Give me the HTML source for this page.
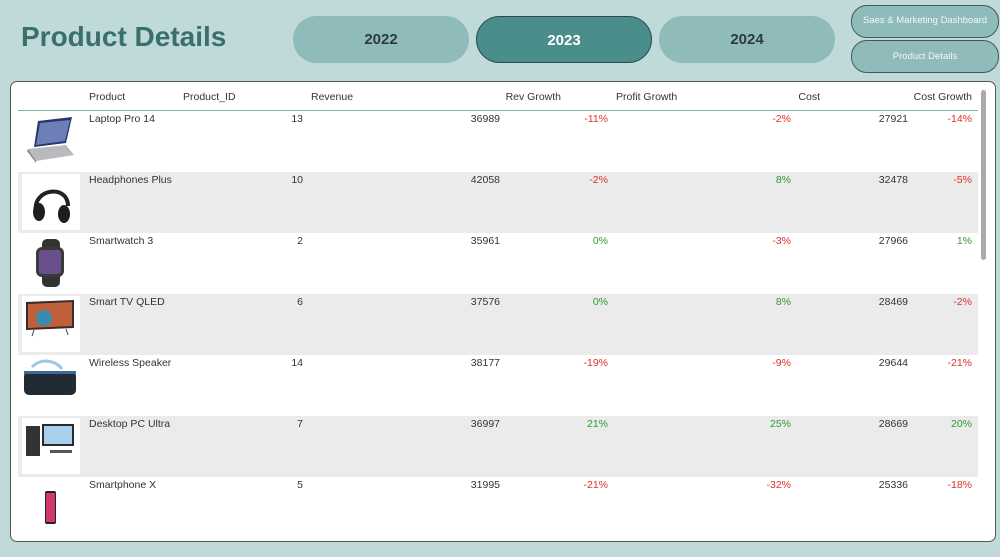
<!DOCTYPE html>
<html><head><style>
*{margin:0;padding:0;box-sizing:border-box}
body{width:1000px;height:557px;background:#bfdad9;font-family:"Liberation Sans",sans-serif;position:relative;overflow:hidden}
.abs{position:absolute}
h1{position:absolute;left:21px;top:21px;font-size:28px;font-weight:bold;color:#3a6f6e}
.yr{position:absolute;top:16px;width:176px;height:47px;border-radius:24px;background:#8fbcbb;font-size:15px;font-weight:bold;color:#2c3c3c;text-align:center;line-height:47px}
.nav{position:absolute;left:851px;width:148px;border:1.5px solid #3c5c5c;border-radius:16px;background:#8fbcbb;color:#f2f8f8;font-size:9.5px;text-align:center}
.panel{position:absolute;left:10px;top:81px;width:986px;height:461px;background:#fff;border:1.5px solid #555;border-radius:7px}
.t{position:absolute;font-size:10.5px;color:#333;white-space:nowrap}
.r{text-align:right}
.red{color:#e0302a}.grn{color:#2f9a2f}
.row{position:absolute;left:18px;width:960px;height:61px}
.g{background:#ebebeb}
.img{position:absolute;left:22px;width:58px;height:56px;background:#fff}
</style></head><body>
<h1>Product Details</h1>
<div class="yr" style="left:293px">2022</div>
<div class="yr" style="left:476px;background:#4a8e8c;border:1.5px solid #2d4a4a;color:#fff">2023</div>
<div class="yr" style="left:659px">2024</div>
<div class="nav" style="top:5px;height:33px;line-height:30px">Saes &amp; Marketing Dashboard</div>
<div class="nav" style="top:40px;height:33px;line-height:31px">Product Details</div>
<div class="panel"></div>
<div class="abs" style="left:18px;top:110px;width:960px;height:1px;background:#7fb3b1"></div>
<div class="abs" style="left:981px;top:90px;width:5px;height:170px;background:#aaa;border-radius:3px"></div>
<div class="t" style="left:89px;top:91px">Product</div>
<div class="t" style="left:183px;top:91px">Product_ID</div>
<div class="t" style="left:311px;top:91px">Revenue</div>
<div class="t r" style="right:439px;top:91px">Rev Growth</div>
<div class="t" style="left:616px;top:91px">Profit Growth</div>
<div class="t r" style="right:180px;top:91px">Cost</div>
<div class="t r" style="right:28px;top:91px">Cost Growth</div>

<div class="row g" style="top:172px"></div>
<div class="row g" style="top:294px"></div>
<div class="row g" style="top:416px"></div>

<svg class="abs" style="left:22px;top:113px" width="58" height="56"><polygon points="16,8 50,4 44,30 12,34" fill="#2a3568"/><polygon points="18,10 48,7 43,28 14,32" fill="#6c7fb8"/><polygon points="6,36 44,32 52,42 14,48" fill="#b8babe"/><polygon points="6,36 14,48 14,50 5,38" fill="#888"/></svg>
<div class="img" style="top:174px"><svg width="58" height="56"><path d="M14,38 C10,14 46,10 46,32" stroke="#222" stroke-width="4" fill="none"/><ellipse cx="17" cy="38" rx="6" ry="9" fill="#1e1e1e"/><ellipse cx="42" cy="40" rx="6" ry="9" fill="#1e1e1e"/></svg></div>
<svg class="abs" style="left:22px;top:235px" width="58" height="56"><rect x="20" y="4" width="18" height="48" rx="5" fill="#333"/><rect x="14" y="12" width="28" height="30" rx="6" fill="#3a3a3a"/><rect x="17" y="15" width="22" height="24" rx="3" fill="#6a4f8a"/></svg>
<div class="img" style="top:296px"><svg width="58" height="56"><polygon points="4,6 52,4 52,32 4,34" fill="#3a2a2a"/><polygon points="6,8 50,6 50,30 6,32" fill="#c0603a"/><circle cx="22" cy="22" r="8" fill="#3b8ab0"/><line x1="12" y1="34" x2="10" y2="40" stroke="#444"/><line x1="44" y1="33" x2="46" y2="39" stroke="#444"/></svg></div>
<svg class="abs" style="left:22px;top:357px" width="58" height="56"><rect x="2" y="14" width="52" height="24" rx="5" fill="#222b33"/><rect x="2" y="14" width="52" height="3" fill="#3a6a9a"/><path d="M10,10 C20,0 34,4 40,12" stroke="#9cc8e6" stroke-width="3" fill="none"/></svg>
<div class="img" style="top:418px"><svg width="58" height="56"><rect x="4" y="8" width="14" height="30" fill="#333"/><rect x="20" y="6" width="32" height="22" fill="#2a2a2a"/><rect x="22" y="8" width="28" height="18" fill="#a8d0ec"/><rect x="28" y="32" width="22" height="3" fill="#555"/></svg></div>
<svg class="abs" style="left:22px;top:479px" width="58" height="56"><rect x="23" y="12" width="11" height="33" rx="2" fill="#222"/><rect x="24" y="14" width="9" height="29" fill="#d03a6a"/></svg>

<div id="rows"></div>
<script>
const d=[["Laptop Pro 14",13,36989,-11,-2,27921,-14],["Headphones Plus",10,42058,-2,8,32478,-5],["Smartwatch 3",2,35961,0,-3,27966,1],["Smart TV QLED",6,37576,0,8,28469,-2],["Wireless Speaker",14,38177,-19,-9,29644,-21],["Desktop PC Ultra",7,36997,21,25,28669,20],["Smartphone X",5,31995,-21,-32,25336,-18]];
let h="";d.forEach((r,i)=>{const y=113+61*i;const c=v=>v<0?"red":"grn";
h+=`<div class="t" style="left:89px;top:${y}px">${r[0]}</div><div class="t r" style="right:697px;top:${y}px">${r[1]}</div><div class="t r" style="right:500px;top:${y}px">${r[2]}</div><div class="t r ${c(r[3])}" style="right:392px;top:${y}px">${r[3]}%</div><div class="t r ${c(r[4])}" style="right:209px;top:${y}px">${r[4]}%</div><div class="t r" style="right:92px;top:${y}px">${r[5]}</div><div class="t r ${c(r[6])}" style="right:28px;top:${y}px">${r[6]}%</div>`});
document.getElementById("rows").innerHTML=h;
</script>
</body></html>
